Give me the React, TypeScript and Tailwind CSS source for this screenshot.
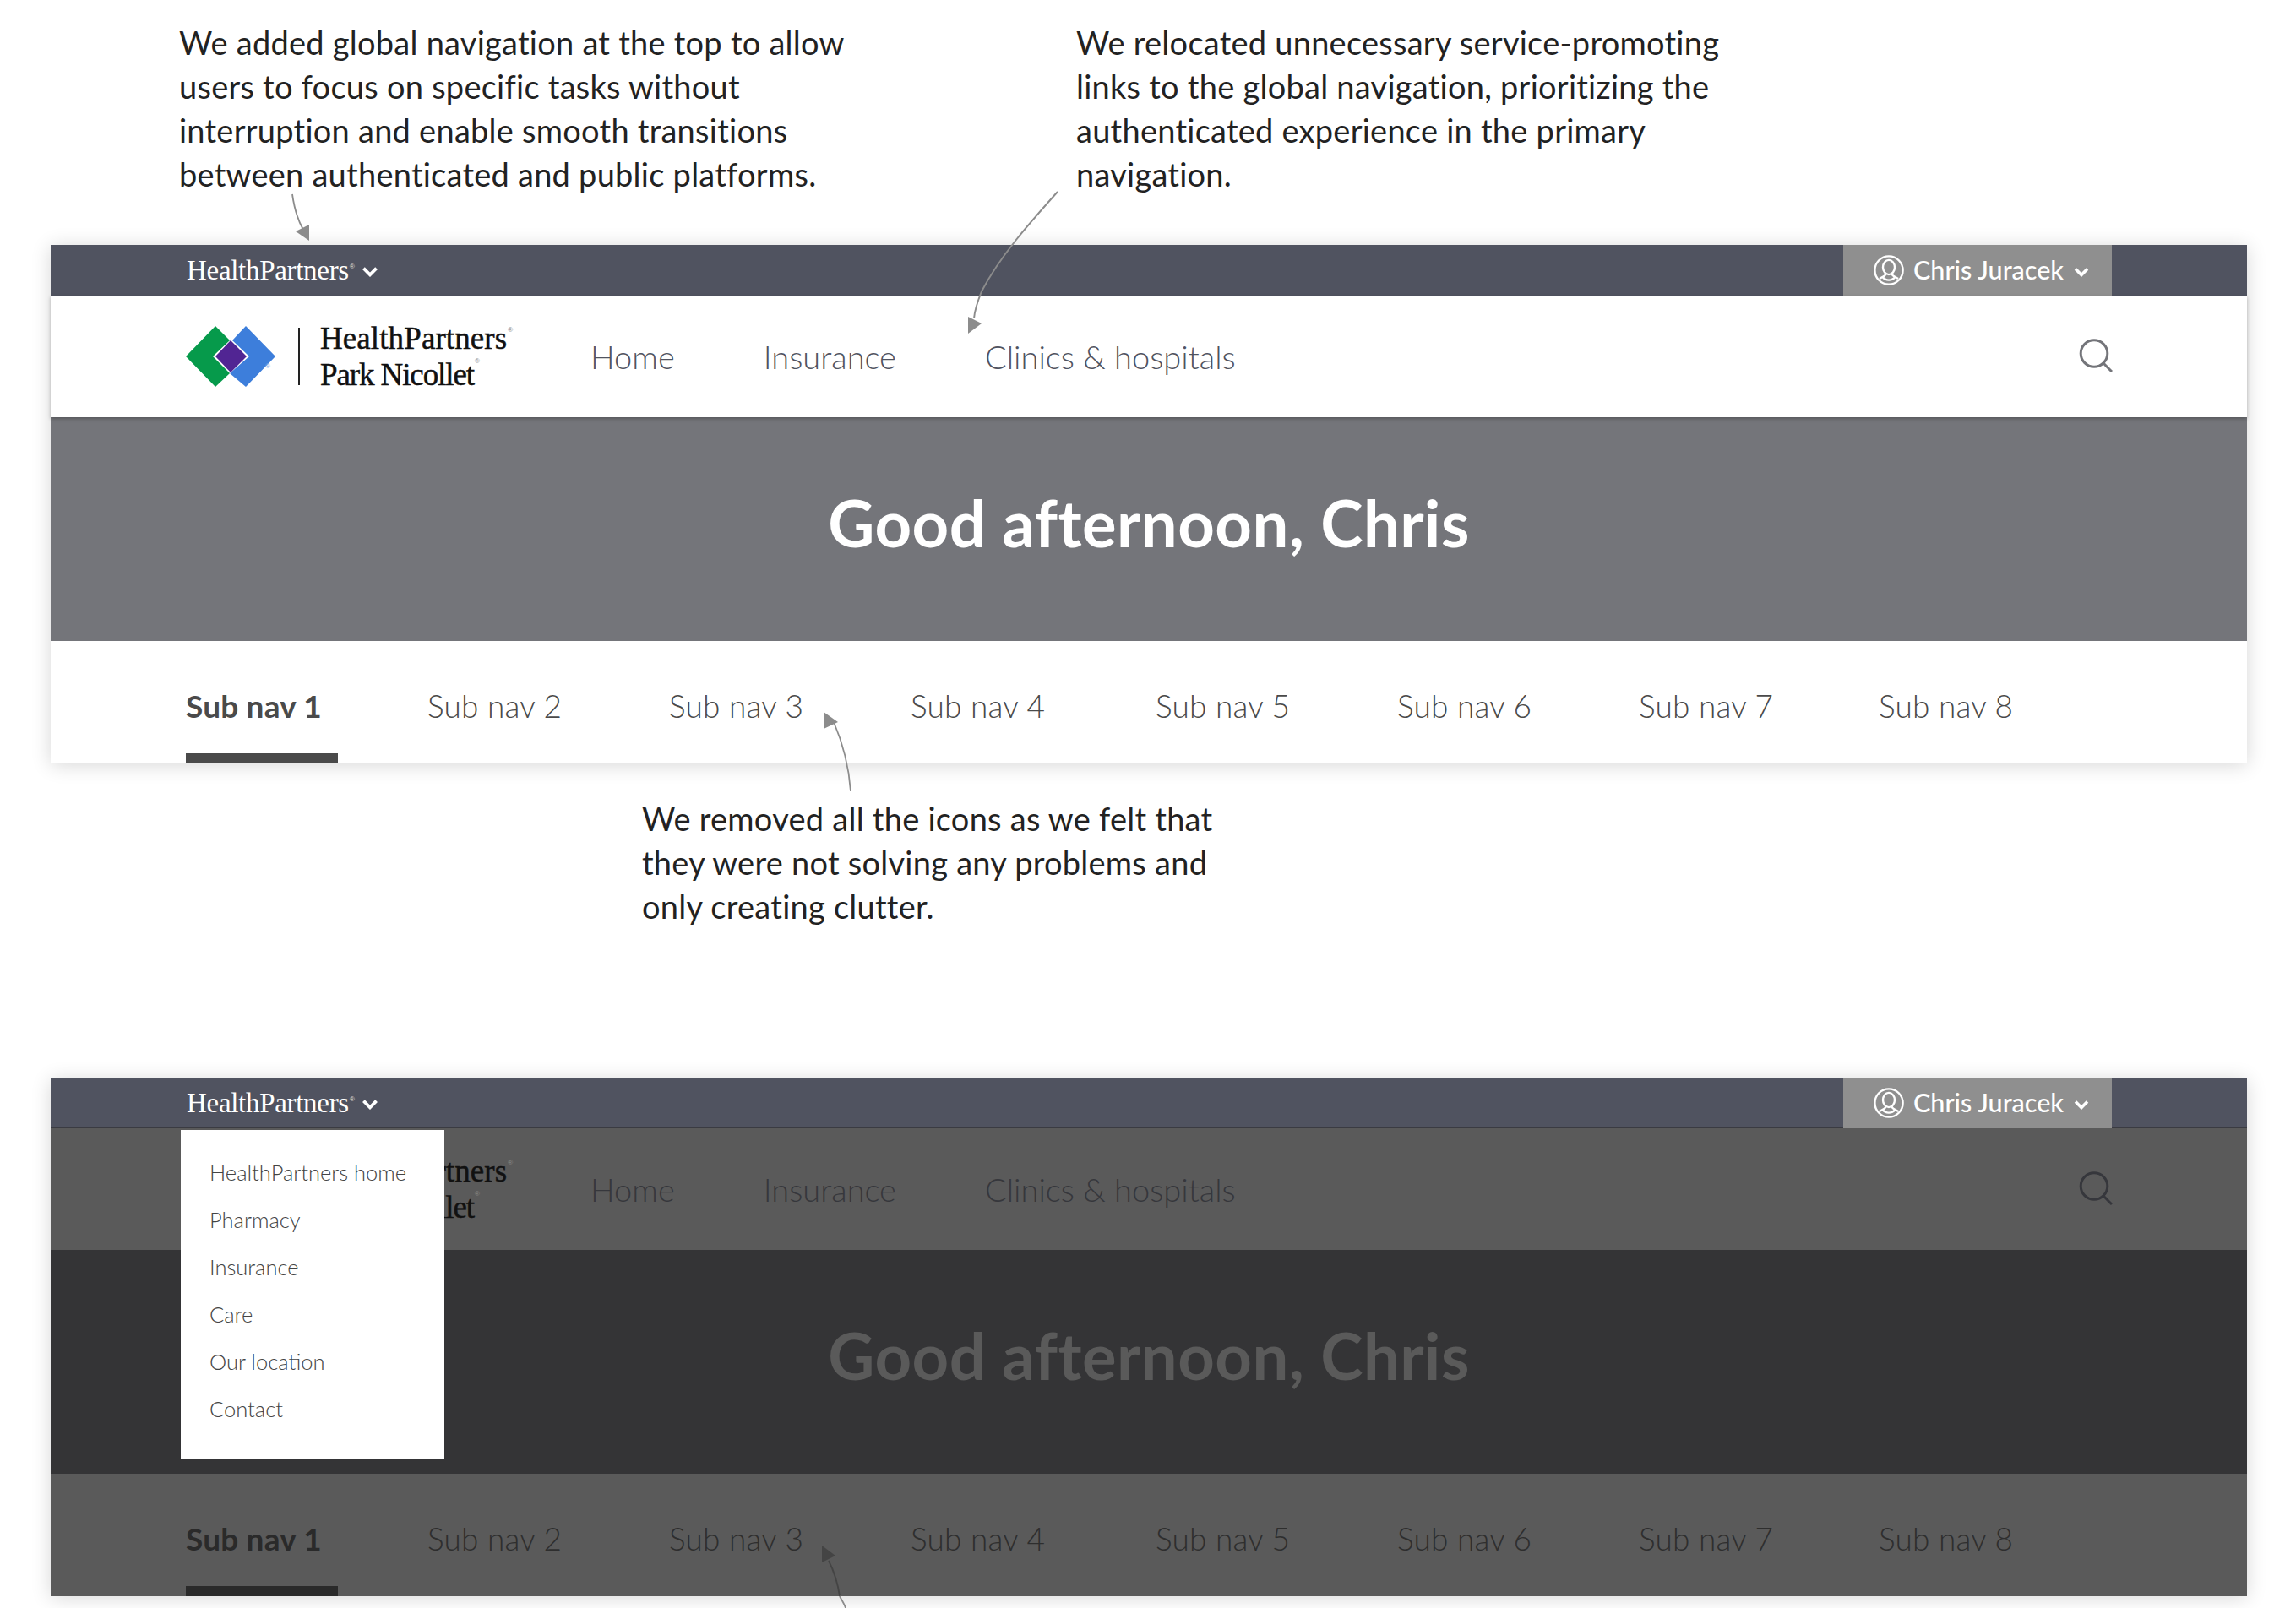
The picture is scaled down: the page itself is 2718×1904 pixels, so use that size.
const subNavs = [
  { label: "Sub nav 1", extra: "" },
  { label: "Sub nav 2", extra: "" },
  { label: "Sub nav 3", extra: "" },
  { label: "Sub nav 4", extra: "" },
  { label: "Sub nav 5", extra: "ml-[4px]" },
  { label: "Sub nav 6", extra: "" },
  { label: "Sub nav 7", extra: "" },
  { label: "Sub nav 8", extra: "-ml-[2px]" },
];

const menuLinks = ["HealthPartners home", "Pharmacy", "Insurance", "Care", "Our location", "Contact"];

const Chevron = ({ className }: { className: string }) => (
  <svg viewBox="0 0 18 12" fill="none" className={className}>
    <path d="M2 2.500l7 7 7-7" stroke="#fff" strokeWidth="3.600" />
  </svg>
);

const UserIcon = () => (
  <svg viewBox="0 0 36 36" fill="none" stroke="#fff" strokeWidth="2.400" className="h-[36px] w-[36px] shrink-0">
    <circle cx="18" cy="18" r="16.600" />
    <ellipse cx="18" cy="14.500" rx="7" ry="8.600" />
    <path d="M14.500 22c-.2 2.200-2.400 3.200-4.200 4l-3.400 2M21.500 22c.2 2.200 2.400 3.200 4.200 4l3.400 2M10.500 26c2 2.600 4.600 3.600 7.500 3.600s5.500-1 7.500-3.600" />
  </svg>
);

const LogoMark = () => (
  <svg viewBox="0 0 110 72" className="h-[72px] w-[110px] shrink-0">
    <polygon points="0,36 35,0 52,17 32,36 52,56 35,72" fill="#069a4b" />
    <polygon points="71,0 106,36 71,72 52,56 75,36 55,17" fill="#3d7edb" />
    <polygon points="35,36 53,17 72,36 53,55" fill="#512593" />
    <text x="94" y="50" fontSize="8" fill="#8db4ea" fontFamily="Liberation Sans, sans-serif">®</text>
  </svg>
);

const Mockup = ({ dimmed, children }: { dimmed?: boolean; children?: React.ReactNode }) => (
  <div className="relative mx-[60px] w-[2600px] shadow-[0_2px_22px_rgba(0,0,0,0.16)]">
    {/* global bar */}
    <div className={`flex items-center justify-between bg-[#505360] pl-[161px] pr-[160px] ${dimmed ? "h-[59px] border-b border-[#3a3b42]" : "h-[60px]"}`}>
      <div className="flex items-center">
        <span className="font-['Liberation_Serif',serif] text-[33px] leading-none tracking-[-0.3px] text-white">HealthPartners</span>
        <span className="mb-[8px] ml-[1px] font-['Liberation_Sans',sans-serif] text-[8px] leading-none text-[#ddd]">®</span>
        <Chevron className="ml-[8px] mt-[3px] h-[13px] w-[20px]" />
      </div>
      <div className="flex h-[60px] w-[318px] items-center bg-[#8f8f8f] pl-[36px]">
        <UserIcon />
        <span className="ml-[11px] pb-[2px] font-['Lato',sans-serif] text-[30.500px] font-medium leading-none text-white">Chris Juracek</span>
        <Chevron className="ml-[11px] mt-[3px] h-[12px] w-[20px]" />
      </div>
    </div>

    {/* primary nav */}
    <div className={`relative z-10 flex h-[144px] items-center justify-between pl-[160px] pr-[159px] ${dimmed ? "bg-[#5a5a5a]" : "bg-white shadow-[0_2px_4px_rgba(0,0,0,0.25)]"}`}>
      <div className="flex items-center">
        <LogoMark />
        <div className="ml-[23px] h-[68px] w-[2px] bg-[#222]" />
        <div className="ml-[24px] flex w-[318px] flex-col font-['Liberation_Serif',serif] text-[37px] leading-[43px] text-[#111] [-webkit-text-stroke:0.5px_#111]">
          <span className="flex tracking-[0.1px]">
            HealthPartners
            <span className="ml-[1px] mt-[2px] font-['Liberation_Sans',sans-serif] text-[8px] leading-[20px] tracking-normal text-[#888] [-webkit-text-stroke:0]">®</span>
          </span>
          <span className="flex tracking-[-1.100px]">
            Park Nicollet
            <span className="ml-[1px] mt-[-4px] font-['Liberation_Sans',sans-serif] text-[8px] leading-[20px] tracking-normal text-[#888] [-webkit-text-stroke:0]">®</span>
          </span>
        </div>
        <nav className={`ml-[2px] flex gap-[105px] font-['Lato',sans-serif] text-[38px] font-light ${dimmed ? "text-[#36373c]" : "text-[#505360]"}`}>
          <span>Home</span>
          <span>Insurance</span>
          <span>Clinics &amp; hospitals</span>
        </nav>
      </div>
      <svg viewBox="0 0 40 40" fill="none" className="-mt-[2px] h-[40px] w-[40px]" stroke={dimmed ? "#36373c" : "#74757a"} strokeWidth="3">
        <circle cx="18" cy="17.500" r="15.800" />
        <path d="M29 29l10 10" />
      </svg>
    </div>

    {/* hero */}
    <div className={`flex h-[265px] items-center justify-center pb-[16px] ${dimmed ? "bg-[#343436]" : "bg-[#74757a]"}`}>
      <h1 className={`font-['Lato',sans-serif] text-[76px] font-bold tracking-[0.5px] ${dimmed ? "text-[#5a5a5a]" : "text-white"}`}>Good afternoon, Chris</h1>
    </div>

    {/* sub nav */}
    <div className={`flex h-[145px] gap-[106px] pl-[160px] font-['Lato',sans-serif] text-[37px] leading-[52px] tracking-[0.2px] ${dimmed ? "bg-[#5a5a5a] text-[#2e2e2e]" : "bg-white text-[#4a4a4a]"}`}>
      {subNavs.map((item, i) => (
        <div
          key={item.label}
          className={`h-[145px] w-[180px] border-b-[12px] pt-[51px] ${item.extra} ${
            i === 0
              ? dimmed
                ? "border-[#2a2a2a] font-bold text-[#2a2a2a]"
                : "border-[#4a4a4a] font-bold"
              : "border-transparent font-light"
          }`}
        >
          {item.label}
        </div>
      ))}
    </div>
    {children}
  </div>
);

const Note = ({ lines }: { lines: string[] }) => (
  <p className="font-['Lato',sans-serif] text-[38px] leading-[52px] tracking-[0.25px] text-[#222]">
    {lines.map((line) => (
      <span key={line} className="block whitespace-nowrap">
        {line}
      </span>
    ))}
  </p>
);

const Arrows = () => (
  <svg viewBox="0 0 2718 1904" fill="none" className="pointer-events-none absolute inset-0 z-20 h-[1904px] w-[2718px]">
    <path d="M346 230c2 14 5 28 13 42" stroke="#8c8c8c" strokeWidth="1.800" />
    <polygon points="350,274 366,266 366,285" fill="#8c8c8c" />
    <path d="M1252 227c-34 38-68 76-90 118-4 10-8 20-9 32" stroke="#8c8c8c" strokeWidth="2" />
    <polygon points="1146,375 1162,383 1146,395" fill="#8c8c8c" />
    <path d="M1007 937c-2-28-8-54-20-82" stroke="#8c8c8c" strokeWidth="1.800" />
    <polygon points="975,843 975,863 992,855" fill="#8c8c8c" />
    <path d="M981 1848c6 12 11 28 13 42" stroke="#444" strokeWidth="1.800" />
    <path d="M994 1890c2 4 6 10 7 14" stroke="#8c8c8c" strokeWidth="1.800" />
    <polygon points="973,1830 973,1850 989,1842" fill="#444" />
  </svg>
);

export default function App() {
  return (
    <div className="relative h-[1904px] w-[2718px] overflow-hidden bg-white">
      <Arrows />
      <div className="flex h-[290px] pl-[212px] pt-[24px]">
        <div className="w-[1062px]">
          <Note
            lines={[
              "We added global navigation at the top to allow",
              "users to focus on specific tasks without",
              "interruption and enable smooth transitions",
              "between authenticated and public platforms.",
            ]}
          />
        </div>
        <Note
          lines={[
            "We relocated unnecessary service-promoting",
            "links to the global navigation, prioritizing the",
            "authenticated experience in the primary",
            "navigation.",
          ]}
        />
      </div>
      <Mockup />
      <div className="h-[373px] pl-[760px] pt-[39px]">
        <Note
          lines={[
            "We removed all the icons as we felt that",
            "they were not solving any problems and",
            "only creating clutter.",
          ]}
        />
      </div>
      <Mockup dimmed>
        <div className="absolute left-[154px] top-[61px] z-30 h-[390px] w-[312px] bg-white pb-[30px] pl-[34px] pt-[22px] font-['Lato',sans-serif] text-[25.500px] font-light text-[#444]">
          {menuLinks.map((link) => (
            <div key={link} className="flex h-[56px] items-center">
              {link}
            </div>
          ))}
        </div>
      </Mockup>
    </div>
  );
}
